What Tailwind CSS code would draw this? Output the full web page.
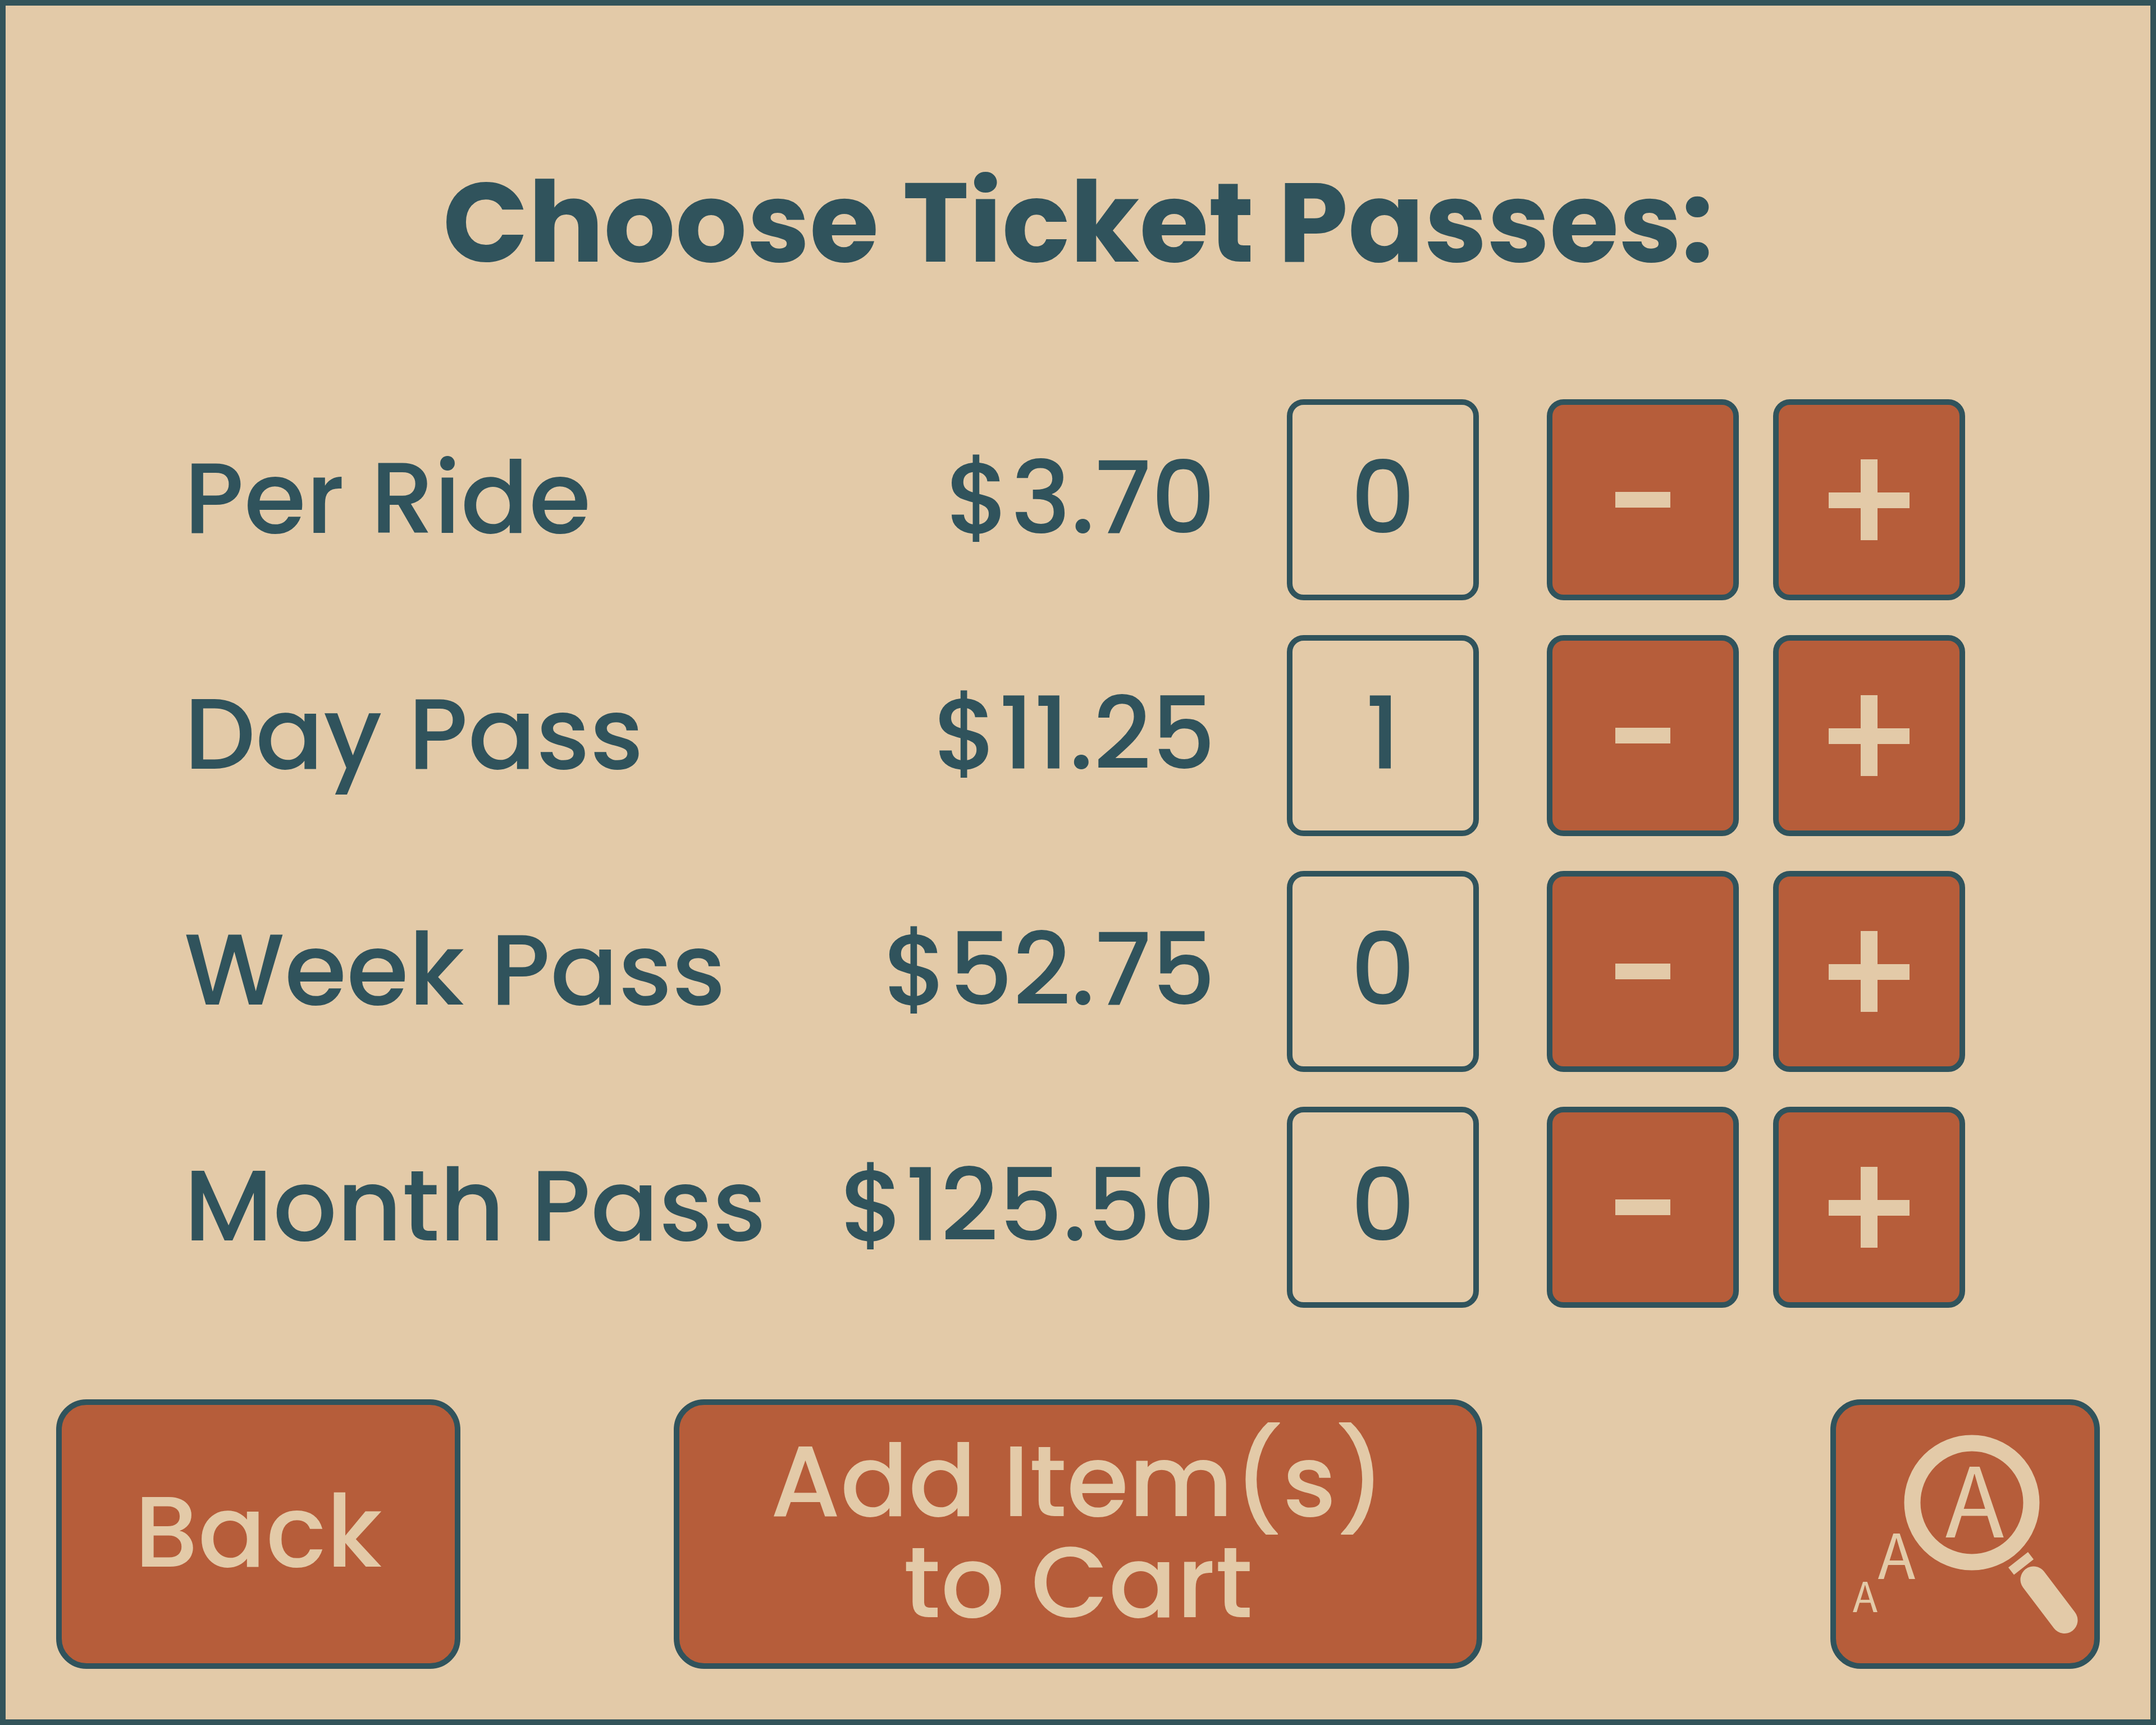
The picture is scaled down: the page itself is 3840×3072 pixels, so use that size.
<!DOCTYPE html>
<html lang="en">
<head>
<meta charset="utf-8">
<meta name="viewport" content="width=device-width, initial-scale=1">
<title>Choose Ticket Passes</title>
<script src="https://cdn.jsdelivr.net/npm/@tailwindcss/browser@4"></script>
</head>
<body class="bg-[#e3caa8] font-['Poppins','Inter',sans-serif] text-[#30535c]">
<main class="flex min-h-screen flex-col border-10 border-[#33545a] px-[90px] pt-[286px] pb-[90px]">
  <h1 class="text-center text-[200px] leading-[200px] font-bold">Choose Ticket Passes:</h1>

  <ul class="mt-[215px] flex flex-col gap-[62px] pr-[240px] pl-[228px] text-[179px] leading-[180px] font-medium">
    <li class="flex items-center">
      <label for="ride" class="flex-1 pb-1.5 whitespace-nowrap">Per Ride</label>
      <span class="pb-1.5 text-right">$3.70</span>
      <input id="ride" type="text" inputmode="numeric" value="0" class="ml-[127px] h-[358px] w-[342px] rounded-[30px] border-10 border-[#30535c] pb-2 text-center">
      <button type="button" aria-label="Remove one Per Ride" class="ml-[121px] flex h-[358px] w-[342px] items-center justify-center rounded-[30px] border-10 border-[#30535c] bg-[#b65d3a] text-[#e3caa8]">
        <svg class="size-36" viewBox="0 0 144 144" fill="currentColor" aria-hidden="true"><path d="M23 58h98v28H23z"/></svg>
      </button>
      <button type="button" aria-label="Add one Per Ride" class="ml-[61px] flex h-[358px] w-[342px] items-center justify-center rounded-[30px] border-10 border-[#30535c] bg-[#b65d3a] text-[#e3caa8]">
        <svg class="size-36" viewBox="0 0 144 144" fill="currentColor" aria-hidden="true"><path d="M57 0h30v59h57v28H87v57H57V87H0V59h57z"/></svg>
      </button>
    </li>
    <li class="flex items-center">
      <label for="day" class="flex-1 pb-1.5 whitespace-nowrap">Day Pass</label>
      <span class="pb-1.5 text-right">$11.25</span>
      <input id="day" type="text" inputmode="numeric" value="1" class="ml-[127px] h-[358px] w-[342px] rounded-[30px] border-10 border-[#30535c] pb-2 text-center">
      <button type="button" aria-label="Remove one Day Pass" class="ml-[121px] flex h-[358px] w-[342px] items-center justify-center rounded-[30px] border-10 border-[#30535c] bg-[#b65d3a] text-[#e3caa8]">
        <svg class="size-36" viewBox="0 0 144 144" fill="currentColor" aria-hidden="true"><path d="M23 58h98v28H23z"/></svg>
      </button>
      <button type="button" aria-label="Add one Day Pass" class="ml-[61px] flex h-[358px] w-[342px] items-center justify-center rounded-[30px] border-10 border-[#30535c] bg-[#b65d3a] text-[#e3caa8]">
        <svg class="size-36" viewBox="0 0 144 144" fill="currentColor" aria-hidden="true"><path d="M57 0h30v59h57v28H87v57H57V87H0V59h57z"/></svg>
      </button>
    </li>
    <li class="flex items-center">
      <label for="week" class="flex-1 pb-1.5 whitespace-nowrap">Week Pass</label>
      <span class="pb-1.5 text-right">$52.75</span>
      <input id="week" type="text" inputmode="numeric" value="0" class="ml-[127px] h-[358px] w-[342px] rounded-[30px] border-10 border-[#30535c] pb-2 text-center">
      <button type="button" aria-label="Remove one Week Pass" class="ml-[121px] flex h-[358px] w-[342px] items-center justify-center rounded-[30px] border-10 border-[#30535c] bg-[#b65d3a] text-[#e3caa8]">
        <svg class="size-36" viewBox="0 0 144 144" fill="currentColor" aria-hidden="true"><path d="M23 58h98v28H23z"/></svg>
      </button>
      <button type="button" aria-label="Add one Week Pass" class="ml-[61px] flex h-[358px] w-[342px] items-center justify-center rounded-[30px] border-10 border-[#30535c] bg-[#b65d3a] text-[#e3caa8]">
        <svg class="size-36" viewBox="0 0 144 144" fill="currentColor" aria-hidden="true"><path d="M57 0h30v59h57v28H87v57H57V87H0V59h57z"/></svg>
      </button>
    </li>
    <li class="flex items-center">
      <label for="month" class="flex-1 pb-1.5 whitespace-nowrap">Month Pass</label>
      <span class="pb-1.5 text-right">$125.50</span>
      <input id="month" type="text" inputmode="numeric" value="0" class="ml-[127px] h-[358px] w-[342px] rounded-[30px] border-10 border-[#30535c] pb-2 text-center">
      <button type="button" aria-label="Remove one Month Pass" class="ml-[121px] flex h-[358px] w-[342px] items-center justify-center rounded-[30px] border-10 border-[#30535c] bg-[#b65d3a] text-[#e3caa8]">
        <svg class="size-36" viewBox="0 0 144 144" fill="currentColor" aria-hidden="true"><path d="M23 58h98v28H23z"/></svg>
      </button>
      <button type="button" aria-label="Add one Month Pass" class="ml-[61px] flex h-[358px] w-[342px] items-center justify-center rounded-[30px] border-10 border-[#30535c] bg-[#b65d3a] text-[#e3caa8]">
        <svg class="size-36" viewBox="0 0 144 144" fill="currentColor" aria-hidden="true"><path d="M57 0h30v59h57v28H87v57H57V87H0V59h57z"/></svg>
      </button>
    </li>
  </ul>

  <nav class="mt-auto flex text-[179px] leading-[180px] font-medium text-[#e3caa8]">
    <button type="button" class="h-[480px] w-[720px] rounded-[54px] border-10 border-[#30535c] bg-[#b65d3a] pb-2">Back</button>
    <button type="button" class="ml-[380px] h-[480px] w-[1440px] rounded-[54px] border-10 border-[#30535c] bg-[#b65d3a] pb-2">Add Item(s)<br>to Cart</button>
    <button type="button" aria-label="Text size" class="ml-auto size-[480px] rounded-[54px] border-10 border-[#30535c] bg-[#b65d3a]">
      <svg class="size-full" viewBox="10 10 460 460" fill="currentColor" aria-hidden="true">
        <circle cx="252" cy="184" r="106" fill="none" stroke="currentColor" stroke-width="29"/>
        <path d="M352 272l10 13-35 27.500-10-13z"/>
        <path d="M362 321l55 72.500" stroke="currentColor" stroke-width="47" stroke-linecap="round"/>
        <g class="font-['Noto_Sans_CJK_SC',sans-serif] font-normal" text-anchor="middle">
          <text x="257" y="246" font-size="172">A</text>
          <text x="118" y="320" font-size="110">A</text>
          <text x="62" y="379" font-size="73">A</text>
        </g>
      </svg>
    </button>
  </nav>
</main>
</body>
</html>
